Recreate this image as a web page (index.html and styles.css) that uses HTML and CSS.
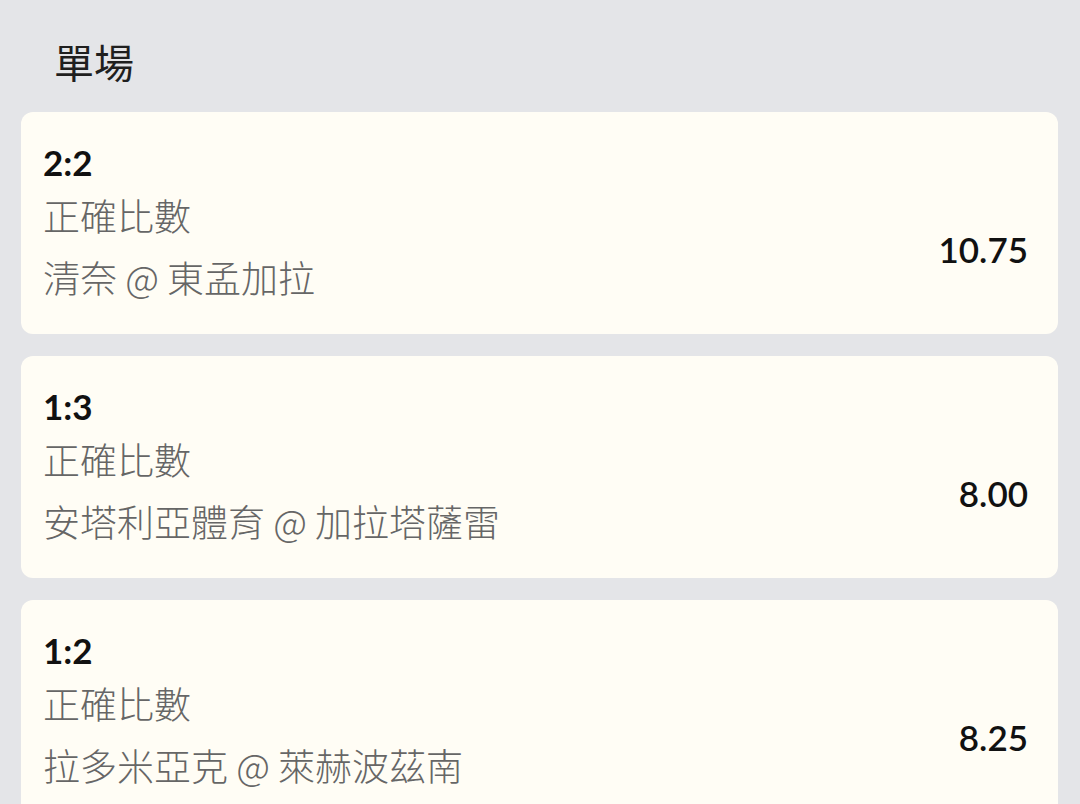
FILE: index.html
```html
<!DOCTYPE html>
<html lang="zh-Hant">

<head>
	<meta charset="UTF-8">
	<title>單場</title>
	<meta name="viewport" content="width=device-width, initial-scale=1.0">
	<link rel="stylesheet" href="styles.css">
</head>

<body>
	<h1 class="section-title">單場</h1>

	<div class="bet-list">
		<div class="bet-card">
			<div class="bet-selection">2:2</div>
			<div class="bet-row">
				<div class="bet-details">
					<div class="bet-market">正確比數</div>
					<div class="bet-event">清奈 @ 東孟加拉</div>
				</div>
				<div class="bet-odds">10.75</div>
			</div>
		</div>

		<div class="bet-card">
			<div class="bet-selection">1:3</div>
			<div class="bet-row">
				<div class="bet-details">
					<div class="bet-market">正確比數</div>
					<div class="bet-event">安塔利亞體育 @ 加拉塔薩雷</div>
				</div>
				<div class="bet-odds">8.00</div>
			</div>
		</div>

		<div class="bet-card">
			<div class="bet-selection">1:2</div>
			<div class="bet-row">
				<div class="bet-details">
					<div class="bet-market">正確比數</div>
					<div class="bet-event">拉多米亞克 @ 萊赫波茲南</div>
				</div>
				<div class="bet-odds">8.25</div>
			</div>
		</div>
	</div>
</body>

</html>
```

FILE: styles.css
```css
body {
	margin: 0;
	background: #e4e5e8;
	color: #1a1a1a;
	font-family: Lato, "Noto Sans CJK TC", sans-serif;
	overflow: hidden;
}

.section-title {
	margin: 0;
	padding: 36px 0 26px 54px;
	font-family: "Noto Sans CJK TC", sans-serif;
	font-size: 40px;
	font-weight: 400;
	line-height: 50px;
	color: #1f1f1f;
}

.bet-list {
	display: flex;
	flex-direction: column;
	gap: 22px;
	padding: 0 22px 0 21px;
}

.bet-card {
	background: #fffdf5;
	border-radius: 12px;
	padding: 28px 30px 26px 22px;
}

.bet-selection {
	font-family: Lato, sans-serif;
	font-weight: 700;
	font-size: 35px;
	line-height: 44px;
	color: #111;
}

.bet-row {
	display: flex;
	align-items: center;
	justify-content: space-between;
}

.bet-market,
.bet-event {
	font-family: "Noto Sans CJK TC", sans-serif;
	font-size: 37px;
	font-weight: 300;
	line-height: 62px;
	color: #666;
}

.bet-odds {
	font-family: Lato, sans-serif;
	font-weight: 600;
	font-size: 35px;
	line-height: 40px;
	color: #111;
	padding-top: 6px;
}
```
